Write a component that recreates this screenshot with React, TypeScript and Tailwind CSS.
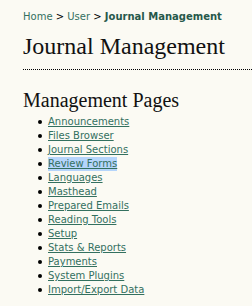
const items = [
  "Announcements",
  "Files Browser",
  "Journal Sections",
  "Review Forms",
  "Languages",
  "Masthead",
  "Prepared Emails",
  "Reading Tools",
  "Setup",
  "Stats & Reports",
  "Payments",
  "System Plugins",
  "Import/Export Data",
];

const sans = "font-['Verdana','DejaVu_Sans',sans-serif]";
const serif = "font-['Georgia','Liberation_Serif',serif]";

export default function App() {
  return (
    <div className="min-h-screen bg-[#fbfaf3] pl-[23px] text-black">
      <div className={`${sans} pt-[10px] text-[10px] leading-[14px]`}>
        <a className="text-[#33705f]">Home</a> &gt;{" "}
        <a className="text-[#33705f]">User</a> &gt;{" "}
        <a className="font-bold text-[#26584a]">Journal Management</a>
      </div>

      <h1 className={`${serif} mt-[8px] text-[24px] leading-[28px] text-[#111]`}>
        Journal Management
      </h1>
      <div className="mt-[9px] border-b border-dotted border-black" />

      <h2 className={`${serif} mt-[19px] text-[20px] leading-[22px] text-[#111]`}>
        Management Pages
      </h2>
      <ul className={`${sans} mt-[4px] text-[10px] leading-[14px]`}>
        {items.map((item) => (
          <li key={item} className="flex items-center">
            <span className="ml-[15px] mr-[6px] h-[4px] w-[4px] rounded-full bg-black" />
            <a
              className={
                "text-[#33705f] underline " +
                (item === "Review Forms" ? "bg-[#b5d5fb]" : "")
              }
            >
              {item}
            </a>
          </li>
        ))}
      </ul>
    </div>
  );
}
